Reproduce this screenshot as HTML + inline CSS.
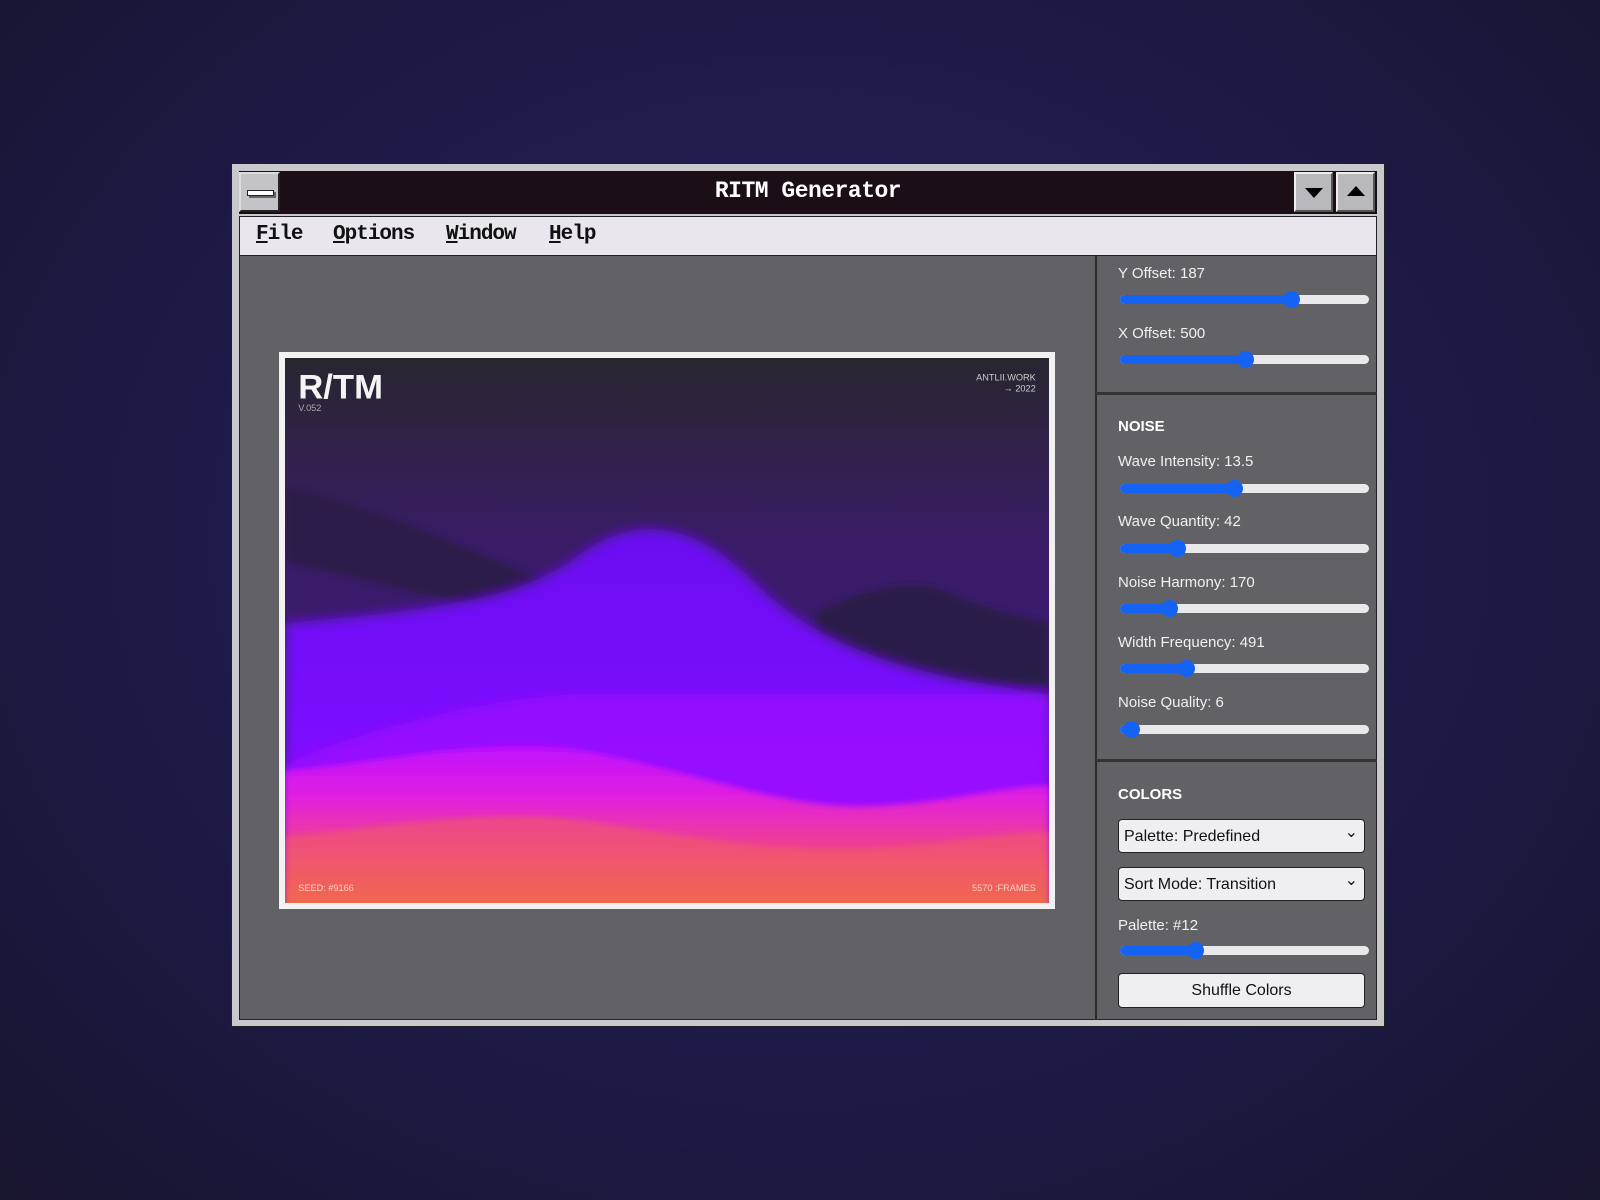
<!DOCTYPE html>
<html><head><meta charset="utf-8"><style>
*{margin:0;padding:0;box-sizing:border-box}
body{width:1600px;height:1200px;overflow:hidden;background:radial-gradient(ellipse at 50% 45%,#26225a 0%,#1f1b4a 50%,#17142f 100%);font-family:"Liberation Sans",sans-serif;position:relative}
.a{position:absolute}
.mono{font-family:"Liberation Mono","DejaVu Sans Mono",monospace;font-weight:bold}
.mn{position:absolute;top:223px;font-size:21px;color:#111;letter-spacing:-1px}
.lbl{position:absolute;left:1118px;color:#f0f0f0;font-size:15px}
.sl{position:absolute;left:1120px;width:249px;height:9px;border-radius:5px;background:#e9e9ec}
.sl i{position:absolute;left:0;top:0;height:9px;border-radius:5px;background:#1463f5}
.sl b{position:absolute;top:-4px;width:17px;height:17px;border-radius:50%;background:#1463f5;margin-left:-8px}
.hd{position:absolute;left:1118px;color:#fff;font-weight:bold;font-size:15px}
.sel{position:absolute;left:1118px;width:247px;height:34px;background:#efeff2;border:1.5px solid #222;border-radius:4px;font-size:16px;color:#111;padding:8px 0 0 5px}
.sel.dd:after{content:"⌄";position:absolute;right:6px;top:2px;font-size:16px}
.btn{position:absolute;width:39px;height:40px;background:#b9b9bd;border:2px solid;border-color:#eee #555 #555 #eee}
</style></head><body>
<div class="a" style="left:231px;top:163px;width:1154px;height:864px;background:#c9c9cd;border:1.5px solid #222"></div>
<div class="a" style="left:239px;top:171px;width:1138px;height:43px;background:#1c0e16;border:1.5px solid #111"></div>
<div class="btn" style="left:239px;top:172px;width:41px;background:#c4c4c8;border-color:#ddd #222 #222 #ddd"><div class="a" style="left:6px;top:16px;width:27px;height:6px;background:#fff;border:1.5px solid #222;box-shadow:2px 2px 0 #666"></div></div>
<div class="a mono" style="left:0;width:1616px;top:178px;text-align:center;color:#fff;font-size:23px;letter-spacing:-0.5px">RITM Generator</div>
<div class="btn" style="left:1294px;top:172px"><div class="a" style="left:9px;top:14px;border-left:9px solid transparent;border-right:9px solid transparent;border-top:10px solid #000"></div></div>
<div class="btn" style="left:1336px;top:172px"><div class="a" style="left:9px;top:12px;border-left:9px solid transparent;border-right:9px solid transparent;border-bottom:10px solid #000"></div></div>
<div class="a" style="left:239px;top:216px;width:1138px;height:40px;background:#e9e6ee;border:1.5px solid #222"></div>
<div class="mn mono" style="left:256px"><u>F</u>ile</div>
<div class="mn mono" style="left:333px"><u>O</u>ptions</div>
<div class="mn mono" style="left:446px"><u>W</u>indow</div>
<div class="mn mono" style="left:549px"><u>H</u>elp</div>
<div class="a" style="left:239px;top:256px;width:1138px;height:764px;background:#626266;border:1.5px solid #222;border-top:none"></div>
<div class="a" style="left:1095px;top:256px;width:2px;height:764px;background:#2a2a2a"></div>
<div class="a" style="left:1096px;top:392px;width:281px;height:3px;background:#333"></div>
<div class="a" style="left:1096px;top:759px;width:281px;height:3px;background:#333"></div>
<div class="a" style="left:279px;top:352px;width:776px;height:557px;background:#f2f2f2;padding:6px">
<svg width="764" height="545" viewBox="0 0 749 535" preserveAspectRatio="none" style="display:block">
<defs>
<linearGradient id="bg" x1="0" y1="0" x2="0" y2="1"><stop offset="0" stop-color="#28262f"/><stop offset=".35" stop-color="#3a1c68"/><stop offset="1" stop-color="#3a1680"/></linearGradient>
<linearGradient id="hill" x1="0" y1="0" x2="0" y2="1"><stop offset="0" stop-color="#6a10f0"/><stop offset=".5" stop-color="#7a10ff"/><stop offset="1" stop-color="#a010ff"/></linearGradient>
<linearGradient id="low" x1="0" y1="0" x2="0" y2="1"><stop offset="0" stop-color="#c010ff"/><stop offset=".3" stop-color="#e020e0"/><stop offset=".6" stop-color="#f04090"/><stop offset="1" stop-color="#f07a30"/></linearGradient>
<filter id="bl"><feGaussianBlur stdDeviation="6"/></filter>
<filter id="bl2"><feGaussianBlur stdDeviation="3"/></filter>
</defs>
<rect width="749" height="535" fill="url(#bg)"/>
<path d="M0 128 C80 140 180 190 260 220 L260 260 L0 200Z" fill="#2a1b45" opacity=".85" filter="url(#bl2)"/>
<path d="M520 250 C560 230 620 210 660 235 C700 250 730 255 749 260 L749 320 L520 320Z" fill="#2c1a4a" filter="url(#bl2)"/>
<path d="M0 260 C120 250 220 240 280 200 C340 150 400 160 460 220 C520 280 600 310 749 330 L749 545 L0 545Z" fill="url(#hill)" filter="url(#bl)"/>
<path d="M0 400 C60 370 200 330 300 330 C420 330 600 330 749 330 L749 535 L0 535Z" fill="#a00cff" opacity=".7" filter="url(#bl)"/>
<path d="M0 405 C80 400 200 370 290 385 C380 400 480 440 560 440 C640 440 700 420 749 420 L749 545 L0 545Z" fill="url(#low)" filter="url(#bl2)"/>
<path d="M0 470 C100 460 200 440 300 455 C400 470 500 490 600 480 C660 475 710 465 749 465 L749 545 L0 545Z" fill="#f06060" opacity=".5" filter="url(#bl2)"/>
<text x="13" y="40" fill="#f4f4f4" font-family="Liberation Sans" font-weight="bold" font-size="34">R/TM</text>
<text x="13" y="52" fill="#aaa" font-family="Liberation Sans" font-size="9">V.052</text>
<text x="736" y="22" fill="#ccc" font-family="Liberation Sans" font-size="9" text-anchor="end">ANTLII.WORK</text>
<text x="736" y="33" fill="#ccc" font-family="Liberation Sans" font-size="9" text-anchor="end">→ 2022</text>
<text x="13" y="523" fill="#ffd0c0" font-family="Liberation Sans" font-size="9">SEED: #9166</text>
<text x="736" y="523" fill="#ffd0c0" font-family="Liberation Sans" font-size="9" text-anchor="end">5570 :FRAMES</text>
</svg></div>
<div class="lbl" style="top:265px">Y Offset: 187</div><div class="sl" style="top:295px"><i style="width:171px"></i><b style="left:171px"></b></div>
<div class="lbl" style="top:325px">X Offset: 500</div><div class="sl" style="top:355px"><i style="width:125px"></i><b style="left:125px"></b></div>
<div class="hd" style="top:418px">NOISE</div>
<div class="lbl" style="top:453px">Wave Intensity: 13.5</div><div class="sl" style="top:484px"><i style="width:114px"></i><b style="left:114px"></b></div>
<div class="lbl" style="top:513px">Wave Quantity: 42</div><div class="sl" style="top:544px"><i style="width:57px"></i><b style="left:57px"></b></div>
<div class="lbl" style="top:574px">Noise Harmony: 170</div><div class="sl" style="top:604px"><i style="width:49px"></i><b style="left:49px"></b></div>
<div class="lbl" style="top:634px">Width Frequency: 491</div><div class="sl" style="top:664px"><i style="width:66px"></i><b style="left:66px"></b></div>
<div class="lbl" style="top:694px">Noise Quality: 6</div><div class="sl" style="top:725px"><i style="width:11px"></i><b style="left:11px"></b></div>
<div class="hd" style="top:786px">COLORS</div>
<div class="sel dd" style="top:819px">Palette: Predefined</div>
<div class="sel dd" style="top:867px">Sort Mode: Transition</div>
<div class="lbl" style="top:917px">Palette: #12</div><div class="sl" style="top:946px"><i style="width:75px"></i><b style="left:75px"></b></div>
<div class="sel" style="top:973px;height:35px;text-align:center;padding:8px 0 0">Shuffle Colors</div>
</body></html>
